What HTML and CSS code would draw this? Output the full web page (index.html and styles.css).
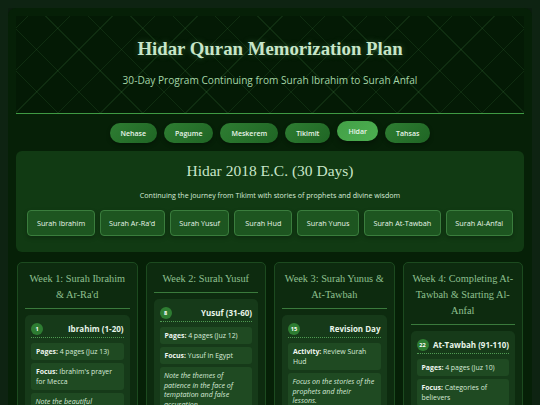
FILE: index.html
```html
<!DOCTYPE html>
<html lang="en">
<head>
<meta charset="utf-8">
<title>Hidar Quran Memorization Plan</title>
<link rel="stylesheet" href="styles.css">
</head>
<body>
<div class="container">
  <header class="header">
    <h1 class="title">Hidar Quran Memorization Plan</h1>
    <p class="subtitle">30-Day Program Continuing from Surah Ibrahim to Surah Anfal</p>
  </header>

  <nav class="months">
    <button class="month-btn">Nehase</button>
    <button class="month-btn">Pagume</button>
    <button class="month-btn">Meskerem</button>
    <button class="month-btn">Tikimit</button>
    <button class="month-btn active">Hidar</button>
    <button class="month-btn">Tahsas</button>
  </nav>

  <section class="month-card">
    <h2 class="month-title">Hidar 2018 E.C. (30 Days)</h2>
    <p class="month-desc">Continuing the journey from Tikimt with stories of prophets and divine wisdom</p>
    <div class="surahs">
      <button class="surah-btn">Surah Ibrahim</button>
      <button class="surah-btn">Surah Ar-Ra'd</button>
      <button class="surah-btn">Surah Yusuf</button>
      <button class="surah-btn">Surah Hud</button>
      <button class="surah-btn">Surah Yunus</button>
      <button class="surah-btn">Surah At-Tawbah</button>
      <button class="surah-btn">Surah Al-Anfal</button>
    </div>
  </section>

  <section class="weeks">
    <article class="week">
      <h3 class="week-title">Week 1: Surah Ibrahim &amp; Ar-Ra'd</h3>
      <div class="day">
        <div class="day-head"><span class="num">1</span><span class="day-title">Ibrahim (1-20)</span></div>
        <div class="box"><b>Pages:</b> 4 pages (Juz 13)</div>
        <div class="box"><b>Focus:</b> Ibrahim's prayer for Mecca</div>
        <div class="box note">Note the beautiful supplications of Prophet Ibrahim.</div>
      </div>
    </article>

    <article class="week">
      <h3 class="week-title">Week 2: Surah Yusuf</h3>
      <div class="day">
        <div class="day-head"><span class="num">8</span><span class="day-title">Yusuf (31-60)</span></div>
        <div class="box"><b>Pages:</b> 4 pages (Juz 12)</div>
        <div class="box"><b>Focus:</b> Yusuf in Egypt</div>
        <div class="box note">Note the themes of patience in the face of temptation and false accusation.</div>
      </div>
    </article>

    <article class="week">
      <h3 class="week-title">Week 3: Surah Yunus &amp; At-Tawbah</h3>
      <div class="day">
        <div class="day-head"><span class="num">15</span><span class="day-title">Revision Day</span></div>
        <div class="box"><b>Activity:</b> Review Surah Hud</div>
        <div class="box note">Focus on the stories of the prophets and their lessons.</div>
      </div>
    </article>

    <article class="week">
      <h3 class="week-title">Week 4: Completing At-Tawbah &amp; Starting Al-Anfal</h3>
      <div class="day">
        <div class="day-head"><span class="num">22</span><span class="day-title">At-Tawbah (91-110)</span></div>
        <div class="box"><b>Pages:</b> 4 pages (Juz 10)</div>
        <div class="box"><b>Focus:</b> Categories of believers</div>
        <div class="box note">Note the qualities of true believers.</div>
      </div>
    </article>
  </section>
</div>
</body>
</html>
```

FILE: styles.css
```css
body {
  margin: 8px;
  background: #0e2312;
  font-family: "Open Sans", "Noto Sans", sans-serif;
  color: #e8f5e9;
}

.container {
  background: #062007;
  border-radius: 8px;
  padding: 8px;
  box-shadow: 0 0 18px rgba(0, 0, 0, 0.55);
  min-height: 420px;
}

.header {
  text-align: center;
  padding: 22px 0 25px;
  border-bottom: 1px solid #3f9a43;
  background-color: #041a05;
  background-image:
    repeating-linear-gradient(45deg, transparent 0 29px, rgba(90, 170, 90, 0.13) 29px 30px),
    repeating-linear-gradient(-45deg, transparent 0 29px, rgba(90, 170, 90, 0.13) 29px 30px);
}

.title {
  margin: 0;
  font-family: "Liberation Serif", serif;
  font-weight: bold;
  font-size: 18.8px;
  line-height: 22px;
  color: #c8e6c9;
  text-shadow: 0 0 6px rgba(129, 199, 132, 0.35);
}

.subtitle {
  margin: 13px 0 0;
  font-size: 10.1px;
  line-height: 15px;
  color: #a5d6a7;
}

.months {
  display: flex;
  justify-content: center;
  gap: 7px;
  margin-top: 9px;
}

.month-btn {
  font-family: inherit;
  font-size: 7px;
  font-weight: 600;
  color: #e8f5e9;
  height: 20px;
  padding: 0 11px;
  border: none;
  border-radius: 10px;
  background: linear-gradient(135deg, #2e7d32, #1f6524);
  box-shadow: 0 2px 4px rgba(0, 0, 0, 0.3);
}

.month-btn.active {
  background: linear-gradient(135deg, #43a047, #4caf50);
  transform: translateY(-2px);
  box-shadow: 0 3px 6px rgba(0, 0, 0, 0.35);
}

.month-card {
  margin-top: 8px;
  background: #113a13;
  border-radius: 6px;
  padding: 10px 8px 16px;
  text-align: center;
}

.month-title {
  margin: 0;
  font-family: "Liberation Serif", serif;
  font-weight: normal;
  font-size: 15.5px;
  line-height: 20px;
  color: #c8e6c9;
}

.month-desc {
  margin: 9px 0 0;
  font-size: 7.1px;
  line-height: 10px;
  color: #d7ebd8;
}

.surahs {
  display: flex;
  flex-wrap: wrap;
  justify-content: center;
  gap: 5px;
  margin-top: 10px;
}

.surah-btn {
  font-family: inherit;
  font-size: 7.25px;
  color: #e8f5e9;
  height: 26px;
  min-width: 58px;
  padding: 0 8.5px;
  background: #1d5520;
  border: 1px solid #3a7d3d;
  border-radius: 4px;
  box-shadow: 0 2px 4px rgba(0, 0, 0, 0.25);
}

.weeks {
  display: grid;
  grid-template-columns: repeat(4, 1fr);
  gap: 8px;
  margin: 10px 1px 0;
  align-items: start;
}

.week {
  background: #0d2b0f;
  border: 1px solid #1c4a1f;
  border-radius: 5px;
  padding: 8px 7px 8px;
}

.week-title {
  margin: 0;
  padding: 0 0 5px;
  border-bottom: 1px solid #3a7a3c;
  font-family: "Liberation Serif", serif;
  font-weight: normal;
  font-size: 10.3px;
  line-height: 16px;
  text-align: center;
  color: #8fc08f;
}

.day {
  margin-top: 6px;
  background: #163a19;
  border-radius: 5px;
  padding: 7px 6px;
}

.day-head {
  display: flex;
  justify-content: space-between;
  align-items: center;
  gap: 3px;
  padding-bottom: 2px;
  border-bottom: 1px dotted #4f9a52;
  margin-bottom: 5px;
}

.num {
  flex: none;
  width: 12px;
  height: 12px;
  border-radius: 50%;
  background: #2e7d32;
  color: #ffffff;
  font-size: 5.6px;
  font-weight: 700;
  display: flex;
  align-items: center;
  justify-content: center;
}

.day-title {
  font-size: 8px;
  font-weight: 700;
  line-height: 13px;
  color: #e8f5e9;
  white-space: nowrap;
}

.box {
  background: #1f4a22;
  border-radius: 3px;
  padding: 3.5px 5px;
  margin-bottom: 3px;
  font-size: 6.9px;
  line-height: 10px;
  color: #d7ebd8;
}

.box b {
  font-weight: 700;
  color: #f1f8f1;
}

.note {
  font-style: italic;
  font-size: 7.1px;
  line-height: 9.7px;
  padding: 4px 4.5px;
}
```
